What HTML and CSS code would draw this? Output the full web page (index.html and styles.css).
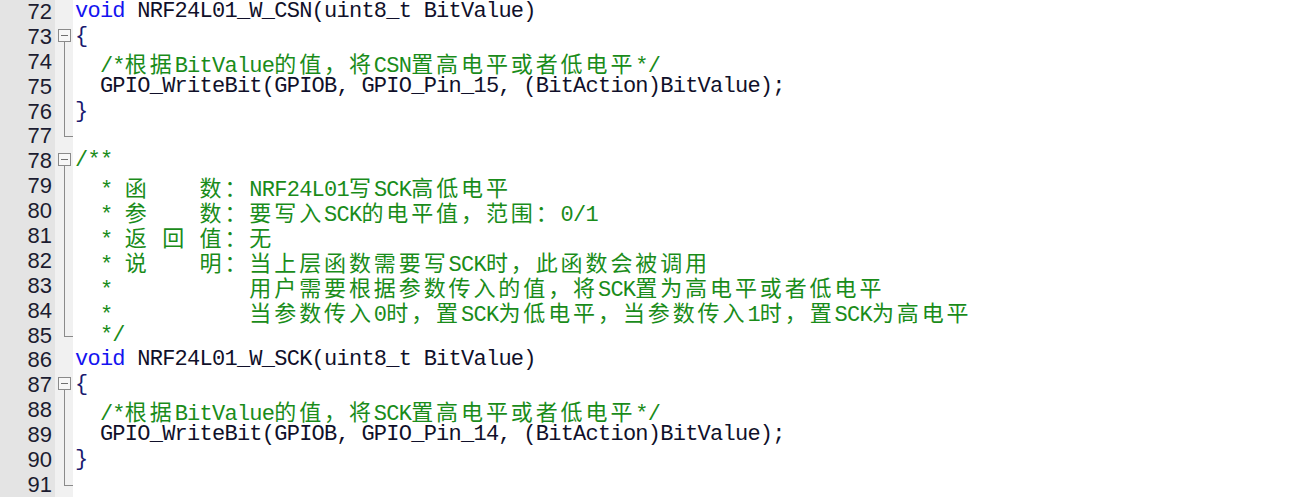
FILE: index.html
```html
<!DOCTYPE html>
<html lang="zh-CN">
<head>
<meta charset="utf-8">
<title>NRF24L01 source</title>
<link rel="stylesheet" href="styles.css">
</head>
<body>
<div class="editor">
  <div class="ln"><span class="num">72</span><span class="fold"></span><span class="code"><span class="kw">void</span> NRF24L01_W_CSN(uint8_t BitValue)</span></div>
  <div class="ln"><span class="num">73</span><span class="fold open"><span class="box"></span></span><span class="code"><span class="br">{</span></span></div>
  <div class="ln"><span class="num">74</span><span class="fold mid"></span><span class="code">  <span class="cm">/*<span class="c">根据</span>BitValue<span class="c">的值，将</span>CSN<span class="c">置高电平或者低电平</span>*/</span></span></div>
  <div class="ln"><span class="num">75</span><span class="fold mid"></span><span class="code">  GPIO_WriteBit(GPIOB, GPIO_Pin_15, (BitAction)BitValue);</span></div>
  <div class="ln"><span class="num">76</span><span class="fold mid"></span><span class="code"><span class="br">}</span></span></div>
  <div class="ln"><span class="num">77</span><span class="fold end"></span><span class="code"></span></div>
  <div class="ln"><span class="num">78</span><span class="fold open"><span class="box"></span></span><span class="code"><span class="cm">/**</span></span></div>
  <div class="ln"><span class="num">79</span><span class="fold mid"></span><span class="code"><span class="cm">  * <span class="c">函</span>    <span class="c">数：</span>NRF24L01<span class="c">写</span>SCK<span class="c">高低电平</span></span></span></div>
  <div class="ln"><span class="num">80</span><span class="fold mid"></span><span class="code"><span class="cm">  * <span class="c">参</span>    <span class="c">数：要写入</span>SCK<span class="c">的电平值，范围：</span>0/1</span></span></div>
  <div class="ln"><span class="num">81</span><span class="fold mid"></span><span class="code"><span class="cm">  * <span class="c">返</span> <span class="c">回</span> <span class="c">值：无</span></span></span></div>
  <div class="ln"><span class="num">82</span><span class="fold mid"></span><span class="code"><span class="cm">  * <span class="c">说</span>    <span class="c">明：当上层函数需要写</span>SCK<span class="c">时，此函数会被调用</span></span></span></div>
  <div class="ln"><span class="num">83</span><span class="fold mid"></span><span class="code"><span class="cm">  *           <span class="c">用户需要根据参数传入的值，将</span>SCK<span class="c">置为高电平或者低电平</span></span></span></div>
  <div class="ln"><span class="num">84</span><span class="fold mid"></span><span class="code"><span class="cm">  *           <span class="c">当参数传入</span>0<span class="c">时，置</span>SCK<span class="c">为低电平，当参数传入</span>1<span class="c">时，置</span>SCK<span class="c">为高电平</span></span></span></div>
  <div class="ln"><span class="num">85</span><span class="fold end"></span><span class="code"><span class="cm">  */</span></span></div>
  <div class="ln"><span class="num">86</span><span class="fold"></span><span class="code"><span class="kw">void</span> NRF24L01_W_SCK(uint8_t BitValue)</span></div>
  <div class="ln"><span class="num">87</span><span class="fold open"><span class="box"></span></span><span class="code"><span class="br">{</span></span></div>
  <div class="ln"><span class="num">88</span><span class="fold mid"></span><span class="code">  <span class="cm">/*<span class="c">根据</span>BitValue<span class="c">的值，将</span>SCK<span class="c">置高电平或者低电平</span>*/</span></span></div>
  <div class="ln"><span class="num">89</span><span class="fold mid"></span><span class="code">  GPIO_WriteBit(GPIOB, GPIO_Pin_14, (BitAction)BitValue);</span></div>
  <div class="ln"><span class="num">90</span><span class="fold mid"></span><span class="code"><span class="br">}</span></span></div>
  <div class="ln"><span class="num">91</span><span class="fold end"></span><span class="code"></span></div>
</div>
</body>
</html>
```

FILE: styles.css
```css
html, body {
  margin: 0;
  padding: 0;
  background: #ffffff;
}

.editor {
  display: flex;
  flex-direction: column;
  width: 1311px;
  height: 497px;
  overflow: hidden;
}

.ln {
  display: grid;
  grid-template-columns: 55px 18px 1fr;
  height: 24.9px;
  flex: none;
}

.num {
  background: #e4e4e4;
  color: #1c1c30;
  font-family: "Liberation Sans", Arial, sans-serif;
  font-size: 22px;
  line-height: 24.9px;
  text-align: right;
  padding-right: 3px;
}

.fold {
  background-color: #f1f1f1;
  display: flex;
  align-items: center;
  justify-content: flex-start;
}

.fold.mid {
  background: linear-gradient(#8a8a8a, #8a8a8a) 9px 0 / 1px 100% no-repeat, #f1f1f1;
}

.fold.end {
  background:
    linear-gradient(#8a8a8a, #8a8a8a) 9px 0 / 1px 12px no-repeat,
    linear-gradient(#8a8a8a, #8a8a8a) 9px 12px / 9px 1px no-repeat,
    #f1f1f1;
}

.fold.open {
  background: linear-gradient(#8a8a8a, #8a8a8a) 9px 17px / 1px 8px no-repeat, #f1f1f1;
  align-items: flex-start;
}

.box {
  box-sizing: border-box;
  width: 13px;
  height: 13px;
  margin: 4px 0 0 3px;
  border: 1px solid #8a8a8a;
  background: linear-gradient(#707070, #707070) 2px 5px / 7px 1px no-repeat, #f7f7f7;
}

.code {
  padding-left: 2px;
  white-space: pre;
  font-family: "Liberation Mono", "Courier New", "Noto Sans CJK SC", monospace;
  font-size: 22px;
  letter-spacing: -0.75px;
  line-height: 24.9px;
  color: #10102a;
}

.kw {
  color: #1414f0;
}

.br {
  color: #1a1a70;
}

.cm {
  color: #1a8c1a;
}

.c {
  font-family: "Noto Sans CJK SC", sans-serif;
  font-size: 22px;
  letter-spacing: 2.9px;
}
```
